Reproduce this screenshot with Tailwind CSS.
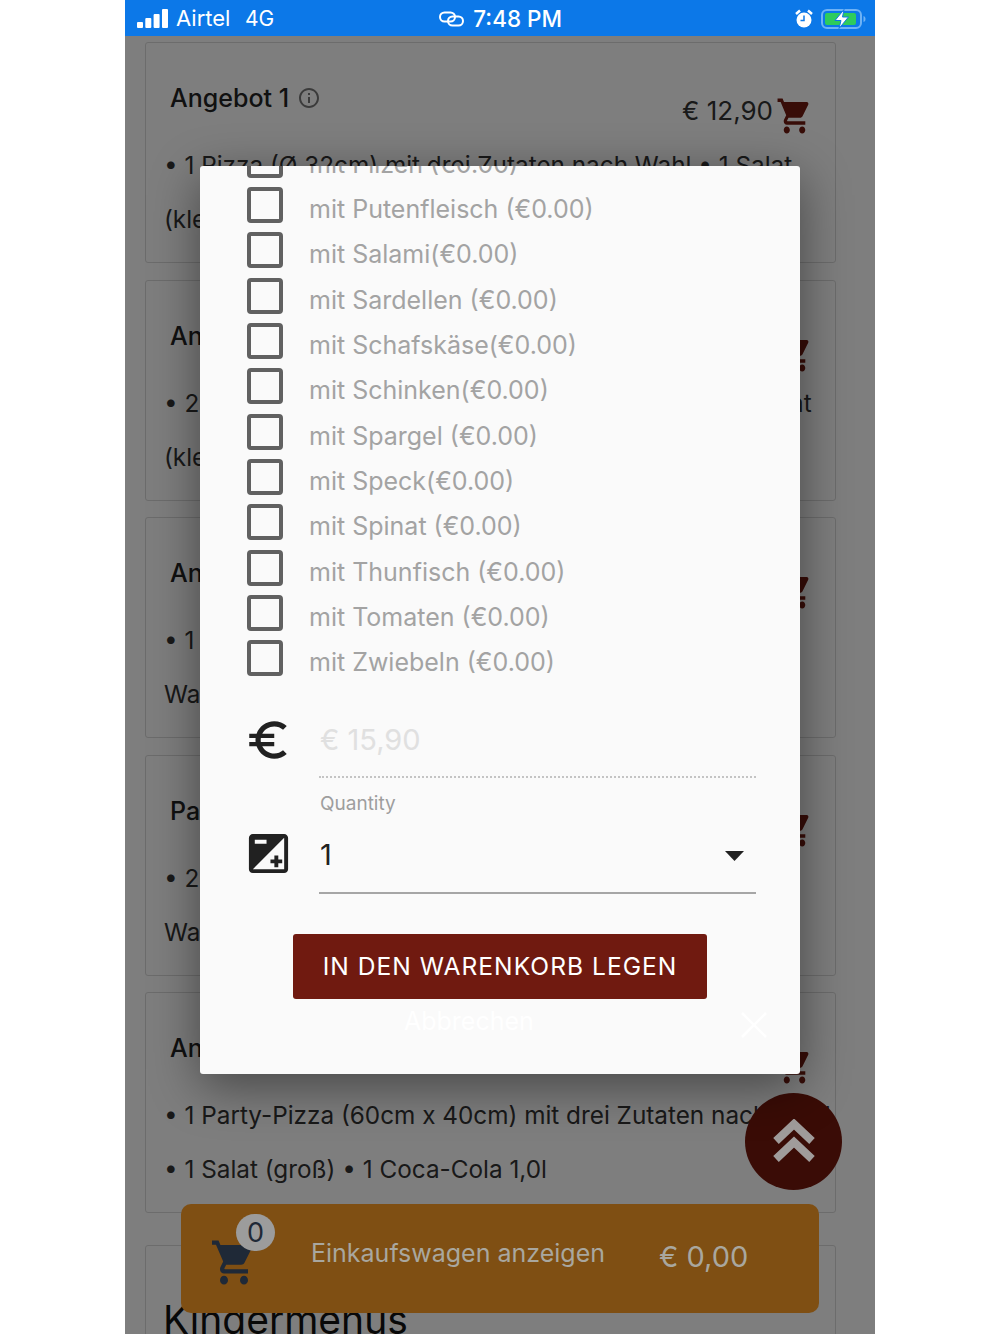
<!DOCTYPE html>
<html lang="en">
  <head>
    <meta charset="UTF-8" />
    <meta name="viewport" content="width=device-width, initial-scale=1.0" />
    <script src="https://cdn.jsdelivr.net/npm/@tailwindcss/browser@4"></script>
    <title>Angebote</title>
  </head>
  <body class="bg-white font-['Inter',sans-serif]">
    <div class="relative w-[750px] h-[1334px] mx-auto overflow-hidden bg-[#fdfdfd]">
      <!-- status bar -->
      <div class="relative z-30 h-[36px] pt-[1px] bg-[#0c78e8] text-white text-[22px] flex items-center">
        <svg class="ml-[12px] w-[32px] h-[20px]" viewBox="0 0 32 20" fill="#fff">
          <rect x="0" y="13" width="6" height="6" rx="1" />
          <rect x="8.300" y="9" width="6" height="10" rx="1" />
          <rect x="16.600" y="5" width="6" height="14" rx="1" />
          <rect x="25" y="0" width="6" height="19" rx="1" />
        </svg>
        <span class="ml-[7px] w-[69px]">Airtel</span>
        <span class="text-[21px]">4G</span>
        <svg class="ml-[165px] w-[26px] h-[18px]" viewBox="0 0 26 18" fill="none" stroke="#fff" stroke-width="2">
          <rect x="1" y="2.500" width="15" height="9" rx="4.500" />
          <rect x="9" y="6.500" width="15" height="9" rx="4.500" />
        </svg>
        <span class="ml-[8px] font-medium text-[22.500px] w-[322px]">7:48 PM</span>
        <svg class="w-[18px] h-[20px]" viewBox="0 0 18 20">
          <circle cx="9" cy="11" r="7.500" fill="#fff" />
          <path d="M1 5l4-3.500M17 5l-4-3.500" stroke="#fff" stroke-width="2.500" />
          <path d="M9 6.500v5H5.500" fill="none" stroke="#0c78e8" stroke-width="1.500" />
        </svg>
        <svg class="ml-[8px] w-[46px] h-[22px]" viewBox="0 0 46 22">
          <rect x="1" y="2" width="39" height="18" rx="5" fill="none" stroke="#6eb2f5" stroke-width="2" />
          <rect x="4" y="5" width="31" height="12" rx="2" fill="#2ecb5c" />
          <path d="M42.500 8v6c1.500-.5 2-1.500 2-3s-.5-2.500-2-3z" fill="#6eb2f5" />
          <path d="M23 1.500L14 12.500h6L18 20.500l9.500-11.500h-6z" fill="#fff" stroke="#0c78e8" stroke-width="1" />
        </svg>
      </div>

      <!-- offers behind the dialog -->
      <div class="pl-[20px] pr-[39px] pt-[6px] flex flex-col gap-[16.500px] text-[#333]">
        <div class="h-[221px] shrink-0 overflow-hidden border border-[#d8d8d8] rounded-[3px] pl-[24px] pr-[25px] pt-[40px]">
          <div class="flex justify-between h-[57px]">
            <div class="flex items-center h-[30px] font-medium text-[#222] text-[25px] leading-[30px]">
              Angebot 1
              <svg class="ml-[8px] w-[24px] h-[24px]" viewBox="0 0 24 24" fill="#777">
                <path d="M11 7h2v2h-2zm0 4h2v6h-2zm1-9C6.480 2 2 6.480 2 12s4.480 10 10 10 10-4.480 10-10S17.520 2 12 2zm0 18c-4.410 0-8-3.590-8-8s3.590-8 8-8 8 3.590 8 8-3.590 8-8 8z" />
              </svg>
            </div>
            <div class="flex items-start text-[26px] leading-[30px] mt-[13px] -mr-[3px]">
              € 12,90
              <svg class="ml-[3px] -mt-[1px] w-[37px] h-[42px]" viewBox="0 0 24 24" preserveAspectRatio="none" fill="#701a10">
                <path d="M7 18c-1.100 0-1.990.9-1.990 2S5.900 22 7 22s2-.9 2-2-.9-2-2-2zM1 2v2h2l3.600 7.590-1.350 2.450c-.16.28-.25.61-.25.96 0 1.100.9 2 2 2h12v-2H7.420c-.14 0-.25-.11-.25-.25l.03-.12.9-1.630h7.450c.75 0 1.410-.41 1.750-1.030l3.580-6.470c.08-.14.12-.31.12-.48 0-.55-.45-1-1-1H5.210l-.94-2H1zm16 16c-1.100 0-1.990.9-1.990 2s.89 2 1.990 2 2-.9 2-2-.9-2-2-2z" />
              </svg>
            </div>
          </div>
          <p class="-ml-[6px] -mt-[2px] text-[24.300px] leading-[54px] whitespace-nowrap">• 1 Pizza (Ø 32cm) mit drei Zutaten nach Wahl • 1 Salat<br />(klein)</p>
        </div>
        <div class="h-[221px] shrink-0 overflow-hidden border border-[#d8d8d8] rounded-[3px] pl-[24px] pr-[25px] pt-[40px]">
          <div class="flex justify-between h-[57px]">
            <div class="h-[30px] font-medium text-[#222] text-[25px] leading-[30px]">Angebot 2</div>
            <svg class="mt-[12px] -mr-[3px] w-[37px] h-[42px]" viewBox="0 0 24 24" preserveAspectRatio="none" fill="#701a10">
              <path d="M7 18c-1.100 0-1.990.9-1.990 2S5.900 22 7 22s2-.9 2-2-.9-2-2-2zM1 2v2h2l3.600 7.590-1.350 2.450c-.16.28-.25.61-.25.96 0 1.100.9 2 2 2h12v-2H7.420c-.14 0-.25-.11-.25-.25l.03-.12.9-1.630h7.450c.75 0 1.410-.41 1.750-1.030l3.580-6.470c.08-.14.12-.31.12-.48 0-.55-.45-1-1-1H5.210l-.94-2H1zm16 16c-1.100 0-1.990.9-1.990 2s.89 2 1.990 2 2-.9 2-2-.9-2-2-2z" />
            </svg>
          </div>
          <p class="-ml-[6px] -mt-[2px] text-[24.300px] leading-[54px] whitespace-nowrap">• 2 Pizzen (Ø 32cm) mit drei Zutaten nach Wahl • 1 Salat<br />(klein)</p>
        </div>
        <div class="h-[221px] shrink-0 overflow-hidden border border-[#d8d8d8] rounded-[3px] pl-[24px] pr-[25px] pt-[40px]">
          <div class="flex justify-between h-[57px]">
            <div class="h-[30px] font-medium text-[#222] text-[25px] leading-[30px]">Angebot 3</div>
            <svg class="mt-[12px] -mr-[3px] w-[37px] h-[42px]" viewBox="0 0 24 24" preserveAspectRatio="none" fill="#701a10">
              <path d="M7 18c-1.100 0-1.990.9-1.990 2S5.900 22 7 22s2-.9 2-2-.9-2-2-2zM1 2v2h2l3.600 7.590-1.350 2.450c-.16.28-.25.61-.25.96 0 1.100.9 2 2 2h12v-2H7.420c-.14 0-.25-.11-.25-.25l.03-.12.9-1.630h7.450c.75 0 1.410-.41 1.750-1.030l3.580-6.470c.08-.14.12-.31.12-.48 0-.55-.45-1-1-1H5.210l-.94-2H1zm16 16c-1.100 0-1.990.9-1.990 2s.89 2 1.990 2 2-.9 2-2-.9-2-2-2z" />
            </svg>
          </div>
          <p class="-ml-[6px] -mt-[2px] text-[24.300px] leading-[54px] whitespace-nowrap">• 1 Pizza<br />Wahl</p>
        </div>
        <div class="h-[221px] shrink-0 overflow-hidden border border-[#d8d8d8] rounded-[3px] pl-[24px] pr-[25px] pt-[40px]">
          <div class="flex justify-between h-[57px]">
            <div class="h-[30px] font-medium text-[#222] text-[25px] leading-[30px]">Party</div>
            <svg class="mt-[12px] -mr-[3px] w-[37px] h-[42px]" viewBox="0 0 24 24" preserveAspectRatio="none" fill="#701a10">
              <path d="M7 18c-1.100 0-1.990.9-1.990 2S5.900 22 7 22s2-.9 2-2-.9-2-2-2zM1 2v2h2l3.600 7.590-1.350 2.450c-.16.28-.25.61-.25.96 0 1.100.9 2 2 2h12v-2H7.420c-.14 0-.25-.11-.25-.25l.03-.12.9-1.630h7.450c.75 0 1.410-.41 1.750-1.030l3.580-6.470c.08-.14.12-.31.12-.48 0-.55-.45-1-1-1H5.210l-.94-2H1zm16 16c-1.100 0-1.990.9-1.990 2s.89 2 1.990 2 2-.9 2-2-.9-2-2-2z" />
            </svg>
          </div>
          <p class="-ml-[6px] -mt-[2px] text-[24.300px] leading-[54px] whitespace-nowrap">• 2 Pizzen<br />Wahl</p>
        </div>
        <div class="h-[221px] shrink-0 overflow-hidden border border-[#d8d8d8] rounded-[3px] pl-[24px] pr-[25px] pt-[40px]">
          <div class="flex justify-between h-[57px]">
            <div class="h-[30px] font-medium text-[#222] text-[25px] leading-[30px]">Angebot 4</div>
            <svg class="mt-[12px] -mr-[3px] w-[37px] h-[42px]" viewBox="0 0 24 24" preserveAspectRatio="none" fill="#701a10">
              <path d="M7 18c-1.100 0-1.990.9-1.990 2S5.900 22 7 22s2-.9 2-2-.9-2-2-2zM1 2v2h2l3.600 7.590-1.350 2.450c-.16.28-.25.61-.25.96 0 1.100.9 2 2 2h12v-2H7.420c-.14 0-.25-.11-.25-.25l.03-.12.9-1.630h7.450c.75 0 1.410-.41 1.750-1.030l3.580-6.470c.08-.14.12-.31.12-.48 0-.55-.45-1-1-1H5.210l-.94-2H1zm16 16c-1.100 0-1.990.9-1.990 2s.89 2 1.990 2 2-.9 2-2-.9-2-2-2z" />
            </svg>
          </div>
          <p class="-ml-[6px] -mt-[2px] text-[24.300px] leading-[54px] whitespace-nowrap">• 1 Party-Pizza (60cm x 40cm) mit drei Zutaten nach Wahl<br />• 1 Salat (groß) • 1 Coca-Cola 1,0l</p>
        </div>
        <div class="mt-[15px] h-[100px] shrink-0 border border-[#d8d8d8] rounded-[3px] pl-[17px] pt-[52px]">
          <h2 class="text-[39px] leading-[44px] text-[#111] whitespace-nowrap">Kindermenus</h2>
        </div>
      </div>

      <!-- dim layer -->
      <div class="absolute inset-x-0 top-[36px] bottom-0 bg-black/50"></div>

      <!-- scroll to top -->
      <div class="absolute left-[620px] top-[1093px] w-[97px] h-[97px] rounded-full bg-[#3a0c06] flex items-center justify-center">
        <svg class="w-[42px] h-[46px]" viewBox="0 0 42 46" fill="none" stroke="#a09c9b" stroke-width="8">
          <path d="M3 22L21 5l18 17M3 40l18-17 18 17" />
        </svg>
      </div>

      <!-- cart bar -->
      <div class="absolute left-[56px] top-[1204px] w-[638px] h-[109px] rounded-[10px] bg-[#7f4f13] flex items-start">
        <svg class="ml-[29px] mt-[32px] w-[48px] h-[53px] shrink-0" viewBox="0 0 24 24" preserveAspectRatio="none" fill="#1f2937">
          <path d="M7 18c-1.100 0-1.990.9-1.990 2S5.900 22 7 22s2-.9 2-2-.9-2-2-2zM1 2v2h2l3.600 7.590-1.350 2.450c-.16.28-.25.61-.25.96 0 1.100.9 2 2 2h12v-2H7.420c-.14 0-.25-.11-.25-.25l.03-.12.9-1.630h7.450c.75 0 1.410-.41 1.750-1.030l3.580-6.470c.08-.14.12-.31.12-.48 0-.55-.45-1-1-1H5.210l-.94-2H1zm16 16c-1.100 0-1.990.9-1.990 2s.89 2 1.990 2 2-.9 2-2-.9-2-2-2z" />
        </svg>
        <span class="absolute left-[55px] top-[10px] w-[39px] h-[37px] rounded-full bg-[#9c9c9c] text-[#1f2937] text-[27px] leading-[37px] text-center">0</span>
        <span class="ml-[53px] mt-[34px] w-[348px] text-[25px] leading-[30px] text-[#a9a79f] whitespace-nowrap">Einkaufswagen anzeigen</span>
        <span class="mt-[35px] text-[29px] leading-[36px] text-[#a9a79f]">€ 0,00</span>
      </div>

      <!-- dialog -->
      <div class="absolute left-[75px] top-[166px] w-[600px] h-[908px] overflow-hidden rounded-[3px] bg-[#fafafa] shadow-[0_12px_50px_rgba(0,0,0,0.45)]">
        <div class="-mt-[24.300px] pl-[47px] text-[#a3a3a3] text-[25px] leading-[36px]">
          <label class="flex items-start h-[45.330px]"><span class="w-[36px] h-[36px] border-4 border-[#616161] rounded-[4px]"></span><span class="ml-[26px] mt-[4px]">mit Pilzen (€0.00)</span></label>
          <label class="flex items-start h-[45.330px]"><span class="w-[36px] h-[36px] border-4 border-[#616161] rounded-[4px]"></span><span class="ml-[26px] mt-[4px]">mit Putenfleisch (€0.00)</span></label>
          <label class="flex items-start h-[45.330px]"><span class="w-[36px] h-[36px] border-4 border-[#616161] rounded-[4px]"></span><span class="ml-[26px] mt-[4px]">mit Salami(€0.00)</span></label>
          <label class="flex items-start h-[45.330px]"><span class="w-[36px] h-[36px] border-4 border-[#616161] rounded-[4px]"></span><span class="ml-[26px] mt-[4px]">mit Sardellen (€0.00)</span></label>
          <label class="flex items-start h-[45.330px]"><span class="w-[36px] h-[36px] border-4 border-[#616161] rounded-[4px]"></span><span class="ml-[26px] mt-[4px]">mit Schafskäse(€0.00)</span></label>
          <label class="flex items-start h-[45.330px]"><span class="w-[36px] h-[36px] border-4 border-[#616161] rounded-[4px]"></span><span class="ml-[26px] mt-[4px]">mit Schinken(€0.00)</span></label>
          <label class="flex items-start h-[45.330px]"><span class="w-[36px] h-[36px] border-4 border-[#616161] rounded-[4px]"></span><span class="ml-[26px] mt-[4px]">mit Spargel (€0.00)</span></label>
          <label class="flex items-start h-[45.330px]"><span class="w-[36px] h-[36px] border-4 border-[#616161] rounded-[4px]"></span><span class="ml-[26px] mt-[4px]">mit Speck(€0.00)</span></label>
          <label class="flex items-start h-[45.330px]"><span class="w-[36px] h-[36px] border-4 border-[#616161] rounded-[4px]"></span><span class="ml-[26px] mt-[4px]">mit Spinat (€0.00)</span></label>
          <label class="flex items-start h-[45.330px]"><span class="w-[36px] h-[36px] border-4 border-[#616161] rounded-[4px]"></span><span class="ml-[26px] mt-[4px]">mit Thunfisch (€0.00)</span></label>
          <label class="flex items-start h-[45.330px]"><span class="w-[36px] h-[36px] border-4 border-[#616161] rounded-[4px]"></span><span class="ml-[26px] mt-[4px]">mit Tomaten (€0.00)</span></label>
          <label class="flex items-start h-[45.330px]"><span class="w-[36px] h-[36px] border-4 border-[#616161] rounded-[4px]"></span><span class="ml-[26px] mt-[4px]">mit Zwiebeln (€0.00)</span></label>
        </div>

        <div class="flex">
          <div class="w-[119px] shrink-0 pl-[43px] pt-[29px]">
            <svg class="w-[50px] h-[50px]" viewBox="0 0 24 24" fill="#212121">
              <path d="M15 18.500c-2.510 0-4.680-1.420-5.760-3.500H15v-2H8.580c-.05-.33-.08-.66-.08-1s.03-.67.08-1H15V9H9.240C10.320 6.920 12.500 5.500 15 5.500c1.610 0 3.090.59 4.230 1.570L21 5.300C19.410 3.870 17.300 3 15 3c-3.920 0-7.240 2.510-8.480 6H3v2h3.060c-.04.33-.06.66-.06 1s.02.67.06 1H3v2h3.520c1.240 3.490 4.560 6 8.480 6 2.310 0 4.410-.87 6-2.300l-1.780-1.770c-1.130.98-2.600 1.570-4.220 1.570z" />
            </svg>
          </div>
          <div class="w-[437px] h-[92px] pt-[37px] pl-[1px] border-b-2 border-dotted border-[#c4c4c4] text-[29px] leading-[34px] text-[#e0e0e0]">€ 15,90</div>
        </div>

        <div class="flex mt-[14px]">
          <div class="w-[119px] shrink-0 pl-[45px] pt-[38px]">
            <svg class="w-[47px] h-[47px]" viewBox="0 0 24 24" fill="#212121">
              <path d="M15 17v2h2v-2h2v-2h-2v-2h-2v2h-2v2h2zm5-15H4c-1.100 0-2 .9-2 2v16c0 1.100.9 2 2 2h16c1.100 0 2-.9 2-2V4c0-1.100-.9-2-2-2zM5 5h6v2H5V5zm15 15H4L20 4v16z" />
            </svg>
          </div>
          <div class="w-[437px]">
            <div class="pl-[1px] text-[19px] leading-[24px] text-[#9e9e9e]">Quantity</div>
            <div class="h-[78px] pt-[22px] pl-[1px] pr-[12px] flex justify-between items-start border-b-2 border-[#a6a6a6] text-[29px] leading-[34px] text-[#212121]">
              1
              <svg class="mt-[13px] w-[19px] h-[10px]" viewBox="0 0 19 10" fill="#212121"><path d="M0 0h19l-9.500 10z" /></svg>
            </div>
          </div>
        </div>

        <button class="block mt-[40px] ml-[93px] w-[414px] h-[65px] rounded-[3px] bg-[#701a10] text-white text-[24.600px] tracking-[1px]">IN DEN WARENKORB LEGEN</button>

        <div class="flex items-start mt-[6px]">
          <span class="ml-[204px] w-[337px] text-[25px] leading-[32px] text-white">Abbrechen</span>
          <svg class="mt-[7px] w-[26px] h-[26px]" viewBox="0 0 26 26" stroke="#fff" stroke-width="2.500"><path d="M1 1l24 24M25 1L1 25" /></svg>
        </div>
      </div>
    </div>
  </body>
</html>
